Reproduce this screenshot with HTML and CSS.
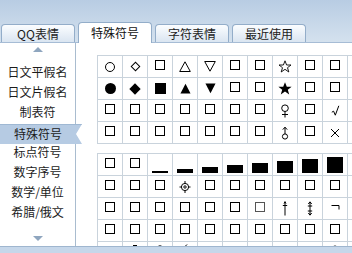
FILE: index.html
```html
<!DOCTYPE html>
<html lang="zh-CN">

<head>
    <meta charset="UTF-8">
    <meta name="viewport" content="width=device-width, initial-scale=1.0">
    <title>特殊符号</title>

    <link rel="stylesheet" href="styles.css">
</head>

<body>
    <svg class="defs" xmlns="http://www.w3.org/2000/svg">
        <symbol id="tu" viewBox="0 0 12 11"><path d="M6 .8 11.3 10.5H.7Z" fill="none" stroke="#000" /></symbol>
        <symbol id="td" viewBox="0 0 12 11"><path d="M.7 .5H11.3L6 10.2Z" fill="none" stroke="#000" /></symbol>
        <symbol id="ftu" viewBox="0 0 12 11"><path d="M6 .3 11.5 11H.5Z" /></symbol>
        <symbol id="ftd" viewBox="0 0 12 11"><path d="M.5 0H11.5L6 10.7Z" /></symbol>
        <symbol id="st" viewBox="0 0 14 13"><path d="M7 .8 8.6 5H13L9.5 7.7 10.8 12 7 9.3 3.2 12 4.5 7.7 1 5H5.4Z" fill="none" stroke="#000" stroke-width=".9" /></symbol>
        <symbol id="fst" viewBox="0 0 14 13"><path d="M7 .3 8.8 4.8H13.6L9.8 7.8 11.2 12.6 7 9.6 2.8 12.6 4.2 7.8.4 4.8H5.2Z" /></symbol>
        <symbol id="fem" viewBox="0 0 12 14"><g fill="none" stroke="#000"><circle cx="6" cy="4.2" r="3.3" /><path d="M6 7.5V13.5M3 10.5H9" /></g></symbol>
        <symbol id="male" viewBox="0 0 8 14"><g fill="none" stroke="#000"><circle cx="4" cy="10.5" r="2.6" /><path d="M4 8V1.2M1.8 3.6 4 1.2 6.2 3.6" /></g></symbol>
        <symbol id="chk" viewBox="0 0 9 11"><path d="M.8 7.2 2.6 6.2 4.3 10.2 7.8.8" fill="none" stroke="#000" /></symbol>
        <symbol id="x" viewBox="0 0 10 10"><path d="M1 1 9 9M9 1 1 9" stroke="#000" /></symbol>
        <symbol id="sun" viewBox="0 0 12 14"><g fill="none" stroke="#000"><circle cx="6" cy="7" r="3.6" /><circle cx="6" cy="7" r="1.2" /><path d="M6 1V3M6 11V13M.5 7H2.4M9.6 7H11.5" /></g></symbol>
        <symbol id="dag" viewBox="0 0 6 15"><path d="M3 .5V14.5M.8 4.5H5.2M2 2.5 3 .8 4 2.5" fill="none" stroke="#000" /></symbol>
        <symbol id="ddag" viewBox="0 0 6 15"><path d="M3 1V14M.8 5H5.2M.8 10H5.2M1.3 3 3 .8 4.7 3M1.3 12 3 14.2 4.7 12" fill="none" stroke="#000" /></symbol>
        <symbol id="not" viewBox="0 0 9 5"><path d="M.5 .5H8V4.5" fill="none" stroke="#000" /></symbol>
        <symbol id="arc" viewBox="0 0 10 5"><path d="M1 4.5Q5 -1 9 4.5" fill="none" stroke="#000" /></symbol>
        <symbol id="tick" viewBox="0 0 8 5"><path d="M6 .5 2 4.5H7" fill="none" stroke="#000" /></symbol>
    </svg>

    <div class="tabs">
        <div class="tab">QQ表情</div>
        <div class="tab active">特殊符号</div>
        <div class="tab">字符表情</div>
        <div class="tab">最近使用</div>
    </div>

    <div class="panel">
        <div class="side">
            <div class="arr up"></div>
            <ul class="cats">
                <li>日文平假名</li>
                <li>日文片假名</li>
                <li>制表符</li>
                <li class="on">特殊符号</li>
                <li>标点符号</li>
                <li>数字序号</li>
                <li>数学/单位</li>
                <li>希腊/俄文</li>
            </ul>
            <div class="arr down"></div>
        </div>

        <div class="content">
            <div class="grid">
                <span class="c"><i class="o"></i></span>
                <span class="c"><i class="d"></i></span>
                <span class="c"><i class="s"></i></span>
                <span class="c"><svg class="i" width="12" height="11"><use href="#tu" /></svg></span>
                <span class="c"><svg class="i" width="12" height="11"><use href="#td" /></svg></span>
                <span class="c"><i class="s"></i></span>
                <span class="c"><i class="s"></i></span>
                <span class="c"><svg class="i" width="14" height="13"><use href="#st" /></svg></span>
                <span class="c"><i class="s"></i></span>
                <span class="c"><i class="s"></i></span>
                <span class="c"><i class="s"></i></span>

                <span class="c"><i class="fo"></i></span>
                <span class="c"><i class="fd"></i></span>
                <span class="c"><i class="fs"></i></span>
                <span class="c"><svg class="i" width="11" height="11"><use href="#ftu" /></svg></span>
                <span class="c"><svg class="i" width="11" height="11"><use href="#ftd" /></svg></span>
                <span class="c"><i class="s"></i></span>
                <span class="c"><i class="s"></i></span>
                <span class="c"><svg class="i" width="14" height="13"><use href="#fst" /></svg></span>
                <span class="c"><i class="s"></i></span>
                <span class="c"><i class="s"></i></span>
                <span class="c"><i class="s"></i></span>

                <span class="c"><i class="s"></i></span>
                <span class="c"><i class="s"></i></span>
                <span class="c"><i class="s"></i></span>
                <span class="c"><i class="s"></i></span>
                <span class="c"><i class="s"></i></span>
                <span class="c"><i class="s"></i></span>
                <span class="c"><i class="s"></i></span>
                <span class="c"><svg class="i" width="12" height="14"><use href="#fem" /></svg></span>
                <span class="c"><i class="s"></i></span>
                <span class="c"><svg class="i" width="9" height="11"><use href="#chk" /></svg></span>
                <span class="c"><i class="s"></i></span>

                <span class="c"><i class="s"></i></span>
                <span class="c"><i class="s"></i></span>
                <span class="c"><i class="s"></i></span>
                <span class="c"><i class="s"></i></span>
                <span class="c"><i class="s"></i></span>
                <span class="c"><i class="s"></i></span>
                <span class="c"><i class="s"></i></span>
                <span class="c"><svg class="i" width="8" height="14"><use href="#male" /></svg></span>
                <span class="c"><i class="s"></i></span>
                <span class="c"><svg class="i" width="10" height="10"><use href="#x" /></svg></span>
                <span class="c"><i class="s"></i></span>
            </div>

            <div class="grid">
                <span class="c"><i class="s"></i></span>
                <span class="c"><i class="s"></i></span>
                <span class="c bot"><i class="bar" style="height:2px"></i></span>
                <span class="c bot"><i class="bar" style="height:4px"></i></span>
                <span class="c bot"><i class="bar" style="height:6px"></i></span>
                <span class="c bot"><i class="bar" style="height:8px"></i></span>
                <span class="c bot"><i class="bar" style="height:10px"></i></span>
                <span class="c bot"><i class="bar" style="height:12px"></i></span>
                <span class="c bot"><i class="bar" style="height:14px"></i></span>
                <span class="c bot"><i class="bar" style="height:16px"></i></span>
                <span class="c"></span>

                <span class="c"><i class="s"></i></span>
                <span class="c"><i class="s"></i></span>
                <span class="c"><i class="s"></i></span>
                <span class="c"><svg class="i" width="12" height="14"><use href="#sun" /></svg></span>
                <span class="c"><i class="s"></i></span>
                <span class="c"><i class="s"></i></span>
                <span class="c"><i class="s"></i></span>
                <span class="c"><i class="s"></i></span>
                <span class="c"><i class="s"></i></span>
                <span class="c"><i class="s"></i></span>
                <span class="c"><i class="s"></i></span>

                <span class="c"><i class="s"></i></span>
                <span class="c"><i class="s"></i></span>
                <span class="c"><i class="s"></i></span>
                <span class="c"><i class="s"></i></span>
                <span class="c"><i class="s"></i></span>
                <span class="c"><i class="s"></i></span>
                <span class="c"><i class="s faint"></i></span>
                <span class="c"><svg class="i" width="6" height="15"><use href="#dag" /></svg></span>
                <span class="c"><svg class="i" width="6" height="15"><use href="#ddag" /></svg></span>
                <span class="c"><svg class="i up2" width="9" height="5"><use href="#not" /></svg></span>
                <span class="c"><i class="s"></i></span>

                <span class="c"><i class="s"></i></span>
                <span class="c"><i class="s"></i></span>
                <span class="c"><i class="s"></i></span>
                <span class="c"><i class="s"></i></span>
                <span class="c"><i class="s"></i></span>
                <span class="c"><i class="s"></i></span>
                <span class="c"><i class="s"></i></span>
                <span class="c"><i class="s"></i></span>
                <span class="c"><i class="s"></i></span>
                <span class="c"><i class="s"></i></span>
                <span class="c"><i class="s"></i></span>

                <span class="c"></span>
                <span class="c top"><i class="dash"></i></span>
                <span class="c top"><svg class="i" width="10" height="5"><use href="#arc" /></svg></span>
                <span class="c top"><svg class="i" width="8" height="5"><use href="#tick" /></svg></span>
                <span class="c"></span>
                <span class="c"><i class="s"></i></span>
                <span class="c"><i class="s"></i></span>
                <span class="c"><i class="s"></i></span>
                <span class="c"><i class="s"></i></span>
                <span class="c top"><svg class="i" width="8" height="5"><use href="#arc" /></svg></span>
                <span class="c"></span>
            </div>
        </div>
    </div>

    <div class="footer"></div>
</body>

</html>
```

FILE: styles.css
```css
* {
    box-sizing: border-box;
}

body {
    margin: 0;
    width: 352px;
    height: 253px;
    overflow: hidden;
    display: flex;
    flex-direction: column;
    font-family: "Noto Sans CJK SC", "DejaVu Sans", sans-serif;
    font-size: 12px;
    color: #1c1c1c;
    background: #fff;
}

.defs {
    display: none;
}

/* Tabs */

.tabs {
    flex: none;
    height: 43px;
    display: flex;
    align-items: flex-end;
    gap: 3px;
    padding-left: 1px;
    border-bottom: 1px solid #a6bcd5;
    background: linear-gradient(#b8cce3, #d4e1ee);
}

.tab {
    width: 74px;
    height: 18px;
    border: 1px solid #93adc9;
    border-bottom: none;
    border-radius: 4px 4px 0 0;
    background: linear-gradient(#fbfdff, #dae5f1);
    text-align: center;
    line-height: 17px;
}

.tab.active {
    height: 21px;
    margin-bottom: -1px;
    background: #fff;
    line-height: 20px;
    color: #111;
}

/* Panel */

.panel {
    flex: 1;
    min-height: 0;
    display: flex;
    overflow: hidden;
}

.side {
    flex: none;
    width: 76px;
    border-right: 1px solid #a9bccf;
    position: relative;
    z-index: 1;
}

.arr {
    width: 0;
    height: 0;
    margin: 0 auto;
    border-left: 5px solid transparent;
    border-right: 5px solid transparent;
}

.arr.up {
    margin-top: 4px;
    margin-bottom: 10px;
    border-bottom: 5px solid #8fa6bf;
}

.arr.down {
    margin-top: 14px;
    border-top: 5px solid #8fa6bf;
}

.cats {
    margin: 0;
    padding: 0;
    list-style: none;
}

.cats li {
    height: 20px;
    line-height: 20px;
    text-align: center;
    white-space: nowrap;
}

.cats li.on {
    width: 82px;
    margin-top: 2px;
    margin-bottom: -2px;
    padding-right: 6px;
    background: #b6cbe3;
    border-top: 1px solid #9fb8d3;
    line-height: 18px;
    clip-path: polygon(0 0, 100% 0, calc(100% - 6px) 50%, 100% 100%, 0 100%);
}

.content {
    flex: 1;
    min-width: 0;
    overflow: hidden;
    padding: 12px 0 0 21px;
}

/* Symbol grids */

.grid {
    display: grid;
    grid-template-columns: repeat(11, 25px);
    grid-auto-rows: 22px;
    width: max-content;
    border-top: 1px solid #c9d3dc;
    border-left: 1px solid #c9d3dc;
}

.grid + .grid {
    margin-top: 9px;
}

.c {
    display: flex;
    align-items: center;
    justify-content: center;
    border-right: 1px solid #c9d3dc;
    border-bottom: 1px solid #c9d3dc;
}

.c.bot {
    align-items: flex-end;
    padding-bottom: 2px;
}

.c.top {
    align-items: flex-start;
    padding-top: 2px;
}

.i {
    display: block;
}

.i.up2 {
    margin-bottom: 2px;
}

.s {
    width: 10px;
    height: 10px;
    margin-bottom: 4px;
    border: 1px solid #000;
}

.s.faint {
    border-color: #555;
}

.o {
    width: 10px;
    height: 10px;
    border: 1px solid #000;
    border-radius: 50%;
}

.fo {
    width: 11px;
    height: 11px;
    background: #000;
    border-radius: 50%;
}

.d {
    width: 7px;
    height: 7px;
    border: 1px solid #000;
    transform: rotate(45deg);
}

.fd {
    width: 8px;
    height: 8px;
    background: #000;
    transform: rotate(45deg);
}

.fs {
    width: 11px;
    height: 11px;
    background: #000;
}

.bar {
    width: 16px;
    background: #000;
}

.dash {
    width: 4px;
    height: 1px;
    margin-top: 1px;
    background: #000;
}

.footer {
    flex: none;
    height: 7px;
    border-top: 1px solid #9fb6cf;
    background: #c6d7ea;
}
```
